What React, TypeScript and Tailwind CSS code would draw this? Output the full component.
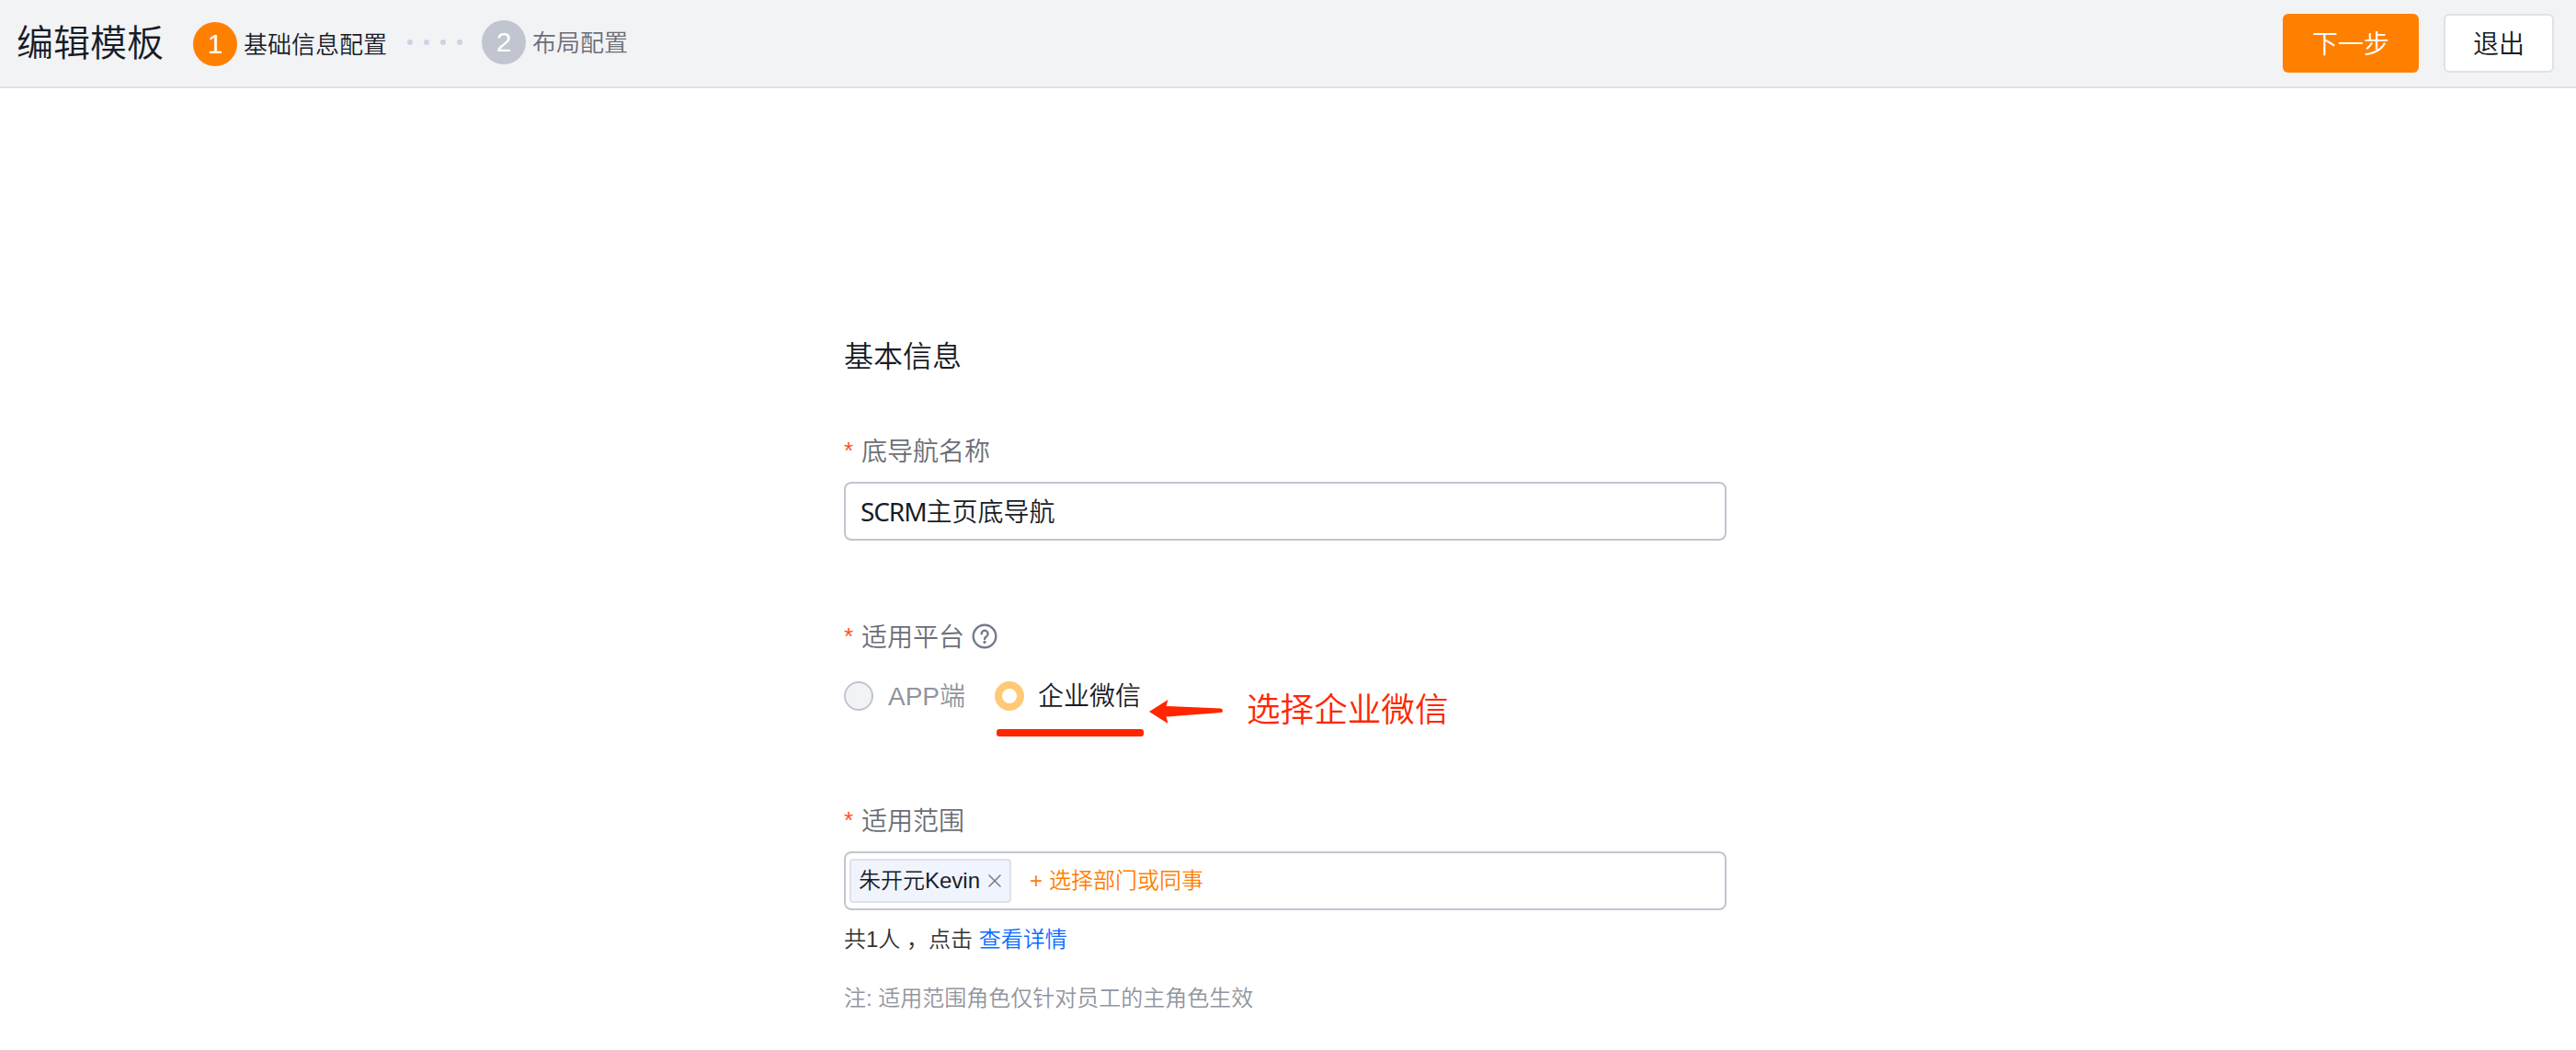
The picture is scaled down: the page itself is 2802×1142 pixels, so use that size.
import { X } from 'lucide-react';

interface Step {
  no: number;
  name: string;
  active: boolean;
}

const steps: Step[] = [
  { no: 1, name: '基础信息配置', active: true },
  { no: 2, name: '布局配置', active: false },
];

function StepItem({ step }: { step: Step }) {
  return (
    <div className={`flex items-center gap-[7px] ${step.active ? 'mt-1' : ''}`}>
      <span
        className={`flex size-12 items-center justify-center rounded-full text-[30px] leading-none text-white ${
          step.active ? 'bg-[#ff8000]' : 'bg-[#c1c5cf]'
        }`}
      >
        {step.no}
      </span>
      <span className={`pt-px text-[26px] leading-9 ${step.active ? 'text-[#181c25]' : 'text-[#6b6e76]'}`}>
        {step.name}
      </span>
    </div>
  );
}

function Header() {
  return (
    <header className="flex h-24 items-center border-b-2 border-[#dee1e8] bg-[#f2f3f5] pl-[18px] pr-6">
      <h1 className="text-[40px] leading-[56px]">编辑模板</h1>
      <div className="mb-0.5 ml-8 flex items-center">
        <StepItem step={steps[0]} />
        <div className="ml-[22px] mr-[21px] flex gap-3">
          {[0, 1, 2, 3].map((i) => (
            <i key={i} className="size-1.5 rounded-full bg-[#c9d3e6]" />
          ))}
        </div>
        <StepItem step={steps[1]} />
      </div>
      <div className="ml-auto flex gap-[27px] text-[28px] leading-none">
        <button className="h-16 w-[148px] rounded-md bg-[#ff8000] pt-1 text-white">下一步</button>
        <button className="h-16 w-[120px] rounded-md border-2 border-[#dee1e8] bg-white pt-1">退出</button>
      </div>
    </header>
  );
}

function Label({ text }: { text: string }) {
  return (
    <span className="flex h-10 items-center pt-[3px] text-[28px] leading-10 text-[#6b6e76]">
      <span className="w-[19px] pb-1 text-[26px] leading-9 text-[#ff522a]">*</span>
      {text}
    </span>
  );
}

function HelpIcon() {
  return (
    <svg viewBox="0 0 28 28" className="ml-2 size-7" fill="none" stroke="#737c8c" strokeWidth="2.4">
      <circle cx="14" cy="14" r="12.3" />
      <path d="M10.6 11.200a3.500 3.500 0 1 1 5.400 3c-1.200.8-2 1.500-2 2.800" strokeLinecap="round" />
      <circle cx="14" cy="20.4" r="1.6" fill="#737c8c" stroke="none" />
    </svg>
  );
}

export default function App() {
  return (
    <div className="h-[1142px] w-[2802px] overflow-hidden bg-white font-['Liberation_Sans','Noto_Sans_CJK_SC',sans-serif] font-[350] text-[#181c25]">
      <Header />

      <main className="ml-[918px] w-[960px] pt-[268px]">
        <h2 className="text-[32px] leading-12">基本信息</h2>

        <section className="mt-[58px]">
          <Label text="底导航名称" />
          <div className="mt-3.5 flex h-16 items-center rounded-lg border-2 border-[#c1c5cf] px-4 font-['Noto_Sans','Noto_Sans_CJK_SC',sans-serif] text-[28px] leading-10">
            <span className="font-normal tracking-[-1.1px]">SCRM</span>主页底导航
          </div>
        </section>

        <section className="relative mt-[84px]">
          <div className="flex items-center">
            <Label text="适用平台" />
            <HelpIcon />
          </div>
          <div className="mt-[25px] flex h-10 items-center text-[28px] leading-10">
            <span className="size-8 rounded-full border-2 border-[#c1c5cf] bg-[#f2f3f5]" />
            <span className="ml-4 pt-px text-[#91959e]">APP端</span>
            <span className="ml-8 size-8 rounded-full border-8 border-[#ffc977] bg-white" />
            <span className="ml-[15px] pt-px">企业微信</span>
          </div>

          {/* annotation */}
          <div className="absolute left-[166px] top-[121px] h-2 w-40 rounded-[3px] bg-[#ff2600]" />
          <svg viewBox="0 0 80 26" className="absolute left-[332px] top-[89px] h-[26px] w-20" fill="#ff2600">
            <path d="M0 13 20.500 0 18.500 7 78 9.500Q80 10 80 12Q80 14 78 14L18.500 18.500 20.500 26Z" />
          </svg>
          <span className="absolute left-[438px] top-[75px] whitespace-nowrap text-[36.6px] leading-[52px] text-[#ff2600]">
            选择企业微信
          </span>
        </section>

        <section className="mt-[95px]">
          <Label text="适用范围" />
          <div className="mt-3.5 flex h-16 items-center rounded-lg border-2 border-[#c1c5cf] px-1 text-2xl leading-9">
            <span className="flex h-12 w-44 items-center rounded border-2 border-[#dee1e8] bg-[#f0f4fc] pl-2">
              朱开元Kevin
              <X className="ml-1 size-6 text-[#737c8c]" strokeWidth={1.5} />
            </span>
            <span className="ml-5 flex text-[#ff8000]">
              <span className="w-[21px]">+</span>选择部门或同事
            </span>
          </div>
          <p className="mt-3.5 text-2xl leading-9 text-[#333]">
            共1人 ，点击 <a className="text-[#0c6cff]">查看详情</a>
          </p>
          <p className="mt-7 text-2xl leading-9 text-[#91959e]">注: 适用范围角色仅针对员工的主角色生效</p>
        </section>
      </main>
    </div>
  );
}
